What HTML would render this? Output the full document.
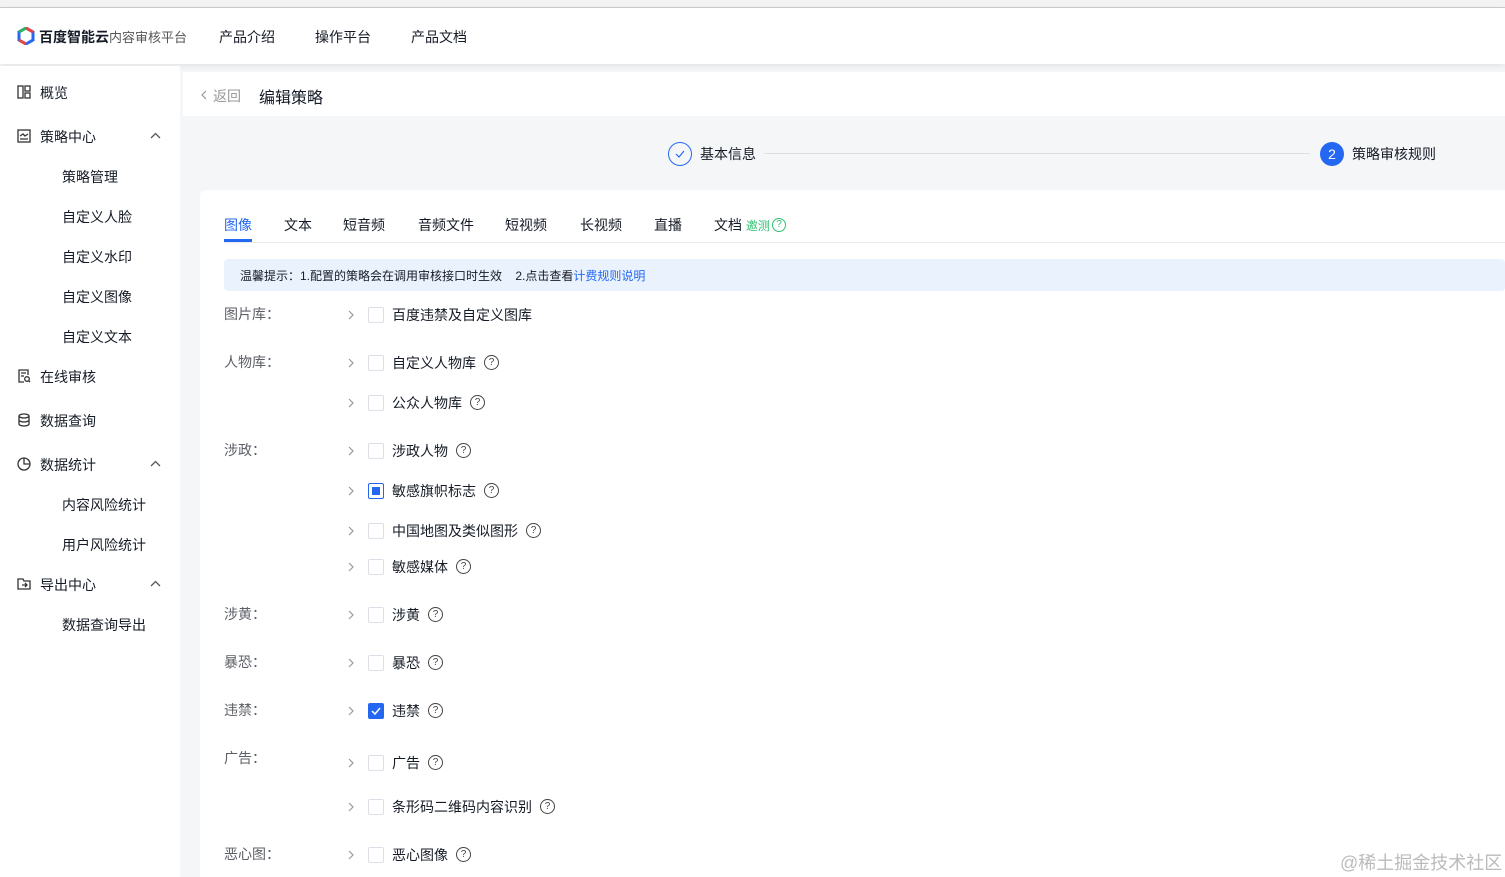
<!DOCTYPE html>
<html><head><meta charset="utf-8"><style>
*{margin:0;padding:0;box-sizing:border-box}
body{width:1505px;height:877px;overflow:hidden;background:#f5f6f8;font-family:"Liberation Sans","Noto Sans CJK SC",sans-serif;font-size:14px;color:#151b26;position:relative}
.a{position:absolute;white-space:nowrap}
.top{left:0;top:0;width:1505px;height:8px;background:#f3f3f3;border-bottom:1px solid #ccc}
.hdr{left:0;top:8px;width:1505px;height:56px;background:#fff;box-shadow:0 2px 6px rgba(0,0,0,.08)}
.side{left:0;top:66px;width:180px;height:811px;background:#fff}
.cb{width:16px;height:16px;border:1px solid #dcdfe6;border-radius:2px;background:#fff}
.q{width:15px;height:15px;border:1.3px solid #444;border-radius:50%;font-size:10px;line-height:13px;text-align:center;color:#444}
.lbl{color:#5c5f66}
.ic{position:absolute;left:17px}
</style></head><body>
<div class="a top"></div>
<div class="a hdr"></div>
<svg class="a" style="left:17px;top:27px" width="18" height="18" viewBox="0 0 18 18"><path d="M9 1L16 5V13L9 17L2 13V5Z" fill="none" stroke="#2468f2" stroke-width="3"/><path d="M9 1L16 5" stroke="#e8453c" stroke-width="3"/><path d="M2 5L9 1" stroke="#2db55d" stroke-width="3"/><path d="M2 13L9 17" stroke="#e8453c" stroke-width="3"/></svg>
<div class="a" style="left:39px;top:27px;font-size:14px;font-weight:bold">百度智能云<span style="font-weight:normal;color:#555;font-size:13px">内容审核平台</span></div>
<div class="a" style="left:219px;top:27px">产品介绍</div>
<div class="a" style="left:315px;top:27px">操作平台</div>
<div class="a" style="left:411px;top:27px">产品文档</div>
<div class="a side"></div>
<svg class="ic" style="top:85px" width="14" height="14" viewBox="0 0 14 14" fill="none" stroke="#333" stroke-width="1.3"><rect x="1" y="1" width="5" height="12"/><rect x="8" y="1" width="5" height="5"/><rect x="8" y="8" width="5" height="5"/></svg>
<div class="a" style="left:40px;top:83px">概览</div>
<svg class="ic" style="top:129px" width="14" height="14" viewBox="0 0 14 14" fill="none" stroke="#333" stroke-width="1.3"><rect x="1" y="1" width="12" height="12"/><path d="M3 7l3-2 2 2 3-2M3 10h8"/></svg>
<div class="a" style="left:40px;top:127px">策略中心</div>
<svg class="a" style="left:150px;top:132px" width="11" height="7" viewBox="0 0 11 7" fill="none" stroke="#555" stroke-width="1.3"><path d="M1 6l4.5-4.5L10 6"/></svg>
<div class="a" style="left:62px;top:167px">策略管理</div>
<div class="a" style="left:62px;top:207px">自定义人脸</div>
<div class="a" style="left:62px;top:247px">自定义水印</div>
<div class="a" style="left:62px;top:287px">自定义图像</div>
<div class="a" style="left:62px;top:327px">自定义文本</div>
<svg class="ic" style="top:369px" width="14" height="14" viewBox="0 0 14 14" fill="none" stroke="#333" stroke-width="1.3"><path d="M11 6V1H2v12h5M4 4h5M4 7h3"/><circle cx="10" cy="10" r="2.3"/><path d="M11.8 11.8L13 13"/></svg>
<div class="a" style="left:40px;top:367px">在线审核</div>
<svg class="ic" style="top:413px" width="14" height="14" viewBox="0 0 14 14" fill="none" stroke="#333" stroke-width="1.3"><ellipse cx="7" cy="3" rx="5" ry="2"/><path d="M2 3v8c0 1.1 2.2 2 5 2s5-.9 5-2V3M2 7c0 1.1 2.2 2 5 2s5-.9 5-2"/></svg>
<div class="a" style="left:40px;top:411px">数据查询</div>
<svg class="ic" style="top:457px" width="14" height="14" viewBox="0 0 14 14" fill="none" stroke="#333" stroke-width="1.3"><circle cx="7" cy="7" r="6"/><path d="M7 1v6h6"/></svg>
<div class="a" style="left:40px;top:455px">数据统计</div>
<svg class="a" style="left:150px;top:460px" width="11" height="7" viewBox="0 0 11 7" fill="none" stroke="#555" stroke-width="1.3"><path d="M1 6l4.5-4.5L10 6"/></svg>
<div class="a" style="left:62px;top:495px">内容风险统计</div>
<div class="a" style="left:62px;top:535px">用户风险统计</div>
<svg class="ic" style="top:577px" width="14" height="14" viewBox="0 0 14 14" fill="none" stroke="#333" stroke-width="1.3"><path d="M1 2h5l1 2h6v8H1z"/><path d="M5 8h5M8 6l2 2-2 2"/></svg>
<div class="a" style="left:40px;top:575px">导出中心</div>
<svg class="a" style="left:150px;top:580px" width="11" height="7" viewBox="0 0 11 7" fill="none" stroke="#555" stroke-width="1.3"><path d="M1 6l4.5-4.5L10 6"/></svg>
<div class="a" style="left:62px;top:615px">数据查询导出</div>
<div class="a" style="left:183px;top:72px;width:1322px;height:44px;background:#fff"></div>
<svg class="a" style="left:201px;top:90px" width="6" height="10" viewBox="0 0 6 10" fill="none" stroke="#999" stroke-width="1.2"><path d="M5 1L1 5l4 4"/></svg>
<div class="a" style="left:213px;top:86px;color:#999">返回</div>
<div class="a" style="left:259px;top:84px;font-size:16px">编辑策略</div>
<div class="a" style="left:668px;top:142px;width:24px;height:24px;border:1.3px solid #2468f2;border-radius:50%"></div>
<svg class="a" style="left:675px;top:150px" width="10" height="8" viewBox="0 0 10 8" fill="none" stroke="#2468f2" stroke-width="1.2"><path d="M1 4l3 3 5-6"/></svg>
<div class="a" style="left:700px;top:144px">基本信息</div>
<div class="a" style="left:764px;top:153px;width:546px;height:1px;background:#dcdfe6"></div>
<div class="a" style="left:1320px;top:142px;width:24px;height:24px;background:#2468f2;border-radius:50%;color:#fff;text-align:center;line-height:24px">2</div>
<div class="a" style="left:1352px;top:144px">策略审核规则</div>
<div class="a" style="left:200px;top:190px;width:1305px;height:687px;background:#fff;border-radius:6px 0 0 0"></div>
<div class="a" style="left:224px;top:215px;color:#2468f2">图像</div>
<div class="a" style="left:224px;top:239px;width:28px;height:3px;background:#2468f2"></div>
<div class="a" style="left:224px;top:242px;width:1281px;height:1px;background:#e8e9eb"></div>
<div class="a" style="left:284px;top:215px">文本</div>
<div class="a" style="left:343px;top:215px">短音频</div>
<div class="a" style="left:418px;top:215px">音频文件</div>
<div class="a" style="left:505px;top:215px">短视频</div>
<div class="a" style="left:580px;top:215px">长视频</div>
<div class="a" style="left:654px;top:215px">直播</div>
<div class="a" style="left:714px;top:215px">文档 <span style="color:#30bf6f;font-size:12px">邀测</span></div>
<div class="a" style="left:772px;top:218px;width:14px;height:14px;border:1.2px solid #30bf6f;border-radius:50%;color:#30bf6f;font-size:10px;line-height:12px;text-align:center">?</div>
<div class="a" style="left:224px;top:259px;width:1281px;height:32px;background:#eaf2fe;border-radius:4px"></div>
<div class="a" style="left:240px;top:267px;font-size:12px">温馨提示：1.配置的策略会在调用审核接口时生效&nbsp;&nbsp;&nbsp;&nbsp;2.点击查看<span style="color:#2468f2">计费规则说明</span></div>
<div id="rows"></div>
<div class="a lbl" style="left:224px;top:304px">图片库：</div>
<div class="a lbl" style="left:224px;top:352px">人物库：</div>
<div class="a lbl" style="left:224px;top:440px">涉政：</div>
<div class="a lbl" style="left:224px;top:604px">涉黄：</div>
<div class="a lbl" style="left:224px;top:652px">暴恐：</div>
<div class="a lbl" style="left:224px;top:700px">违禁：</div>
<div class="a lbl" style="left:224px;top:748px">广告：</div>
<div class="a lbl" style="left:224px;top:844px">恶心图：</div>
<script>
var r=[[315,'百度违禁及自定义图库',0,0],[363,'自定义人物库',1,0],[403,'公众人物库',1,0],[451,'涉政人物',1,0],[491,'敏感旗帜标志',1,1],[531,'中国地图及类似图形',1,0],[567,'敏感媒体',1,0],[615,'涉黄',1,0],[663,'暴恐',1,0],[711,'违禁',1,2],[763,'广告',1,0],[807,'条形码二维码内容识别',1,0],[855,'恶心图像',1,0]];
var h='';r.forEach(function(x){var y=x[0];h+='<svg class="a" style="left:348px;top:'+(y-5)+'px" width="6" height="10" viewBox="0 0 6 10" fill="none" stroke="#999" stroke-width="1.2"><path d="M1 1l4 4-4 4"/></svg>';
var st=x[3]==1?'border-color:#2468f2':x[3]==2?'background:#2468f2;border-color:#2468f2':'';
h+='<div class="a cb" style="left:368px;top:'+(y-8)+'px;'+st+'">'+(x[3]==1?'<div style="margin:3px;width:8px;height:8px;background:#2468f2"></div>':x[3]==2?'<svg width="14" height="14" viewBox="0 0 14 14" fill="none" stroke="#fff" stroke-width="1.5"><path d="M3 7l3 3 5-6"/></svg>':'')+'</div>';
h+='<div class="a" style="left:392px;top:'+(y-10)+'px">'+x[1]+'</div>';
if(x[2])h+='<div class="a q" style="left:'+(392+x[1].length*14+8)+'px;top:'+(y-8)+'px">?</div>';});
document.getElementById('rows').innerHTML=h;
</script>
<div class="a" style="left:1340px;top:849px;font-size:18px;color:#bbb">@稀土掘金技术社区</div>
</body></html>
